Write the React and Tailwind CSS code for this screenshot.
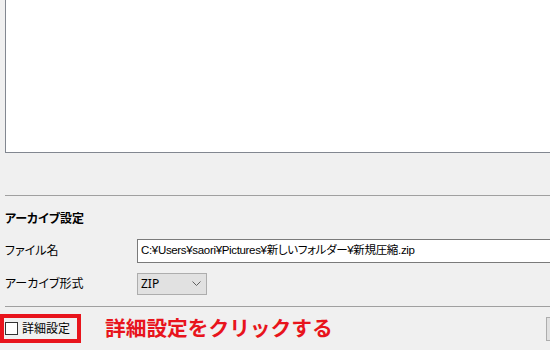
import React from "react";

const jp = "font-['Noto_Sans','Noto_Sans_CJK_JP',sans-serif] [font-feature-settings:'palt']";

export default function App() {
  return (
    <div className={`w-[550px] h-[350px] overflow-hidden bg-[#f0f0f0] text-black ${jp}`}>
      {/* ファイル一覧 */}
      <div className="ml-[5px] h-[153px] bg-white border-l border-b border-[#828790]" />

      {/* 区切り */}
      <div className="mt-[42px] ml-[5px] h-px bg-[#a0a0a0]" />

      <div className="pl-[5px]">
        <div className="mt-[14px] h-[18px] text-[12px] font-bold leading-[18px]">アーカイブ設定</div>

        <div className="mt-[11px] flex items-center h-[24px]">
          <div className="w-[132px] text-[12px]">ファイル名</div>
          <div className="flex-1 h-[24px] -mr-[4px] bg-white border border-[#7a7a7a] pl-[3px] flex items-center text-[11.5px] whitespace-nowrap font-['Liberation_Sans','Noto_Sans_CJK_JP',sans-serif] tracking-[-0.33px]">
            C:¥Users¥saori¥Pictures¥新しいフォルダー¥新規圧縮.zip
          </div>
        </div>

        <div className="mt-[10px] flex items-center h-[22px]">
          <div className="w-[132px] text-[12px]">アーカイブ形式</div>
          <div className="w-[70px] h-[22px] bg-[#e1e1e1] border border-[#adadad] flex items-center justify-between pl-[3px] pr-[5px] text-[12px]">
            <span>ZIP</span>
            <svg width="9" height="6" viewBox="0 0 9 6">
              <polyline points="0.5,0.5 4.5,4.5 8.5,0.5" fill="none" stroke="#606060" strokeWidth="1" />
            </svg>
          </div>
        </div>
      </div>

      {/* 区切り */}
      <div className="mt-[11px] ml-[5px] h-px bg-[#a0a0a0]" />

      <div className="mt-[7px] flex items-center">
        <div className="w-[81px] h-[29px] border-[4px] border-[#e8141c] flex items-center pl-px gap-[4px]">
          <div className="w-[13px] h-[13px] bg-white border border-[#333]" />
          <span className="text-[12px]">詳細設定</span>
        </div>
        <div className="ml-[24px] text-[20.7px] leading-none font-bold text-[#e8141c] [font-feature-settings:normal]">
          詳細設定をクリックする
        </div>
        <div className="ml-auto -mr-[20px] w-[24px] h-[24px] bg-[#e1e1e1] border border-[#adadad]" />
      </div>
    </div>
  );
}
